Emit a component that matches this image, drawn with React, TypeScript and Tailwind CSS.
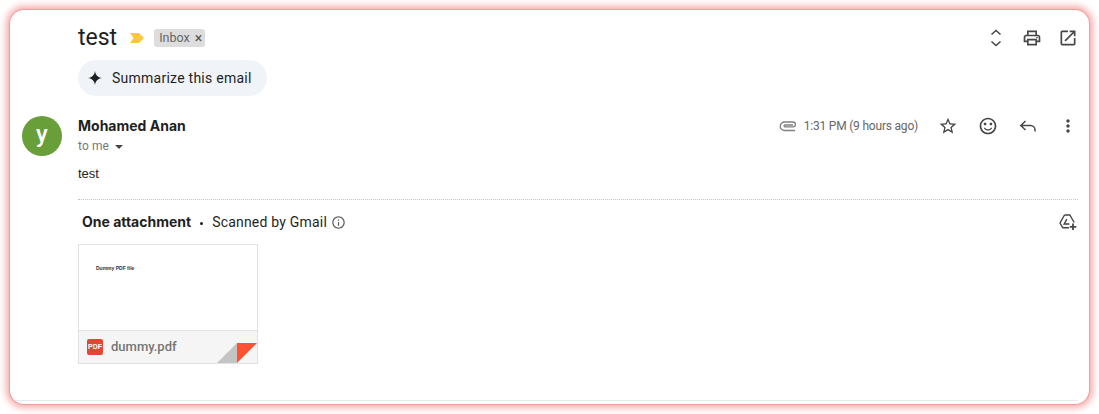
import {
  MdMoreVert,
  MdOpenInNew,
  MdOutlineInfo,
  MdOutlinePrint,
  MdSentimentSatisfiedAlt,
  MdStarBorder,
} from 'react-icons/md'

const sans = "font-['Roboto',sans-serif]"

export default function App() {
  return (
    <div className={`h-[414px] w-[1099px] overflow-hidden bg-white p-[10px] ${sans}`}>
      <div className="flex h-[394px] flex-col rounded-[14px] bg-white pr-[11px] pl-[12px] shadow-[0_0_0_1px_#f29c9c,0_0_7px_4px_#f6acac]">
        {/* Subject */}
        <div className="flex h-[34px] items-center pt-[22px] pl-[56px]">
          <span className="text-[23px] leading-[28px] text-[#1f1f1f]">test</span>
          <svg className="ml-[13px] h-[10px] w-[15px]" viewBox="0 0 15 10" aria-hidden="true">
            <path d="M0 0h9l5 5-5 5H0l3.500-5z" fill="#fbc73f" />
          </svg>
          <span className="ml-[9px] flex h-[18px] w-[51px] items-center rounded-[3px] bg-[#dddddd] pl-[5px] text-[12.5px] text-[#666666]">
            Inbox
            <span className="ml-[5px] text-[14px] leading-none text-[#555555]">×</span>
          </span>
          <div className="ml-auto flex items-center text-[#444746]">
            <svg className="h-[20px] w-[20px]" viewBox="0 0 20 20" fill="none" stroke="currentColor" strokeWidth="1.500" aria-hidden="true">
              <path d="M5.500 6.500 10 2.500l4.500 4M5.500 13.500l4.500 4 4.500-4" />
            </svg>
            <MdOutlinePrint size={20} className="ml-[16px]" />
            <MdOpenInNew size={20} className="ml-[16px]" />
          </div>
        </div>

        {/* Summarize */}
        <div className="mt-[16px] ml-[56px] flex h-[36px] w-[189px] items-center rounded-[18px] bg-[#f0f4f9] pl-[10px]">
          <svg className="h-[14px] w-[14px]" viewBox="0 0 14 14" aria-hidden="true">
            <path d="M7 0c.6 4 2.600 6.400 7 7-4.400.6-6.400 3-7 7-.6-4-2.600-6.400-7-7 4.400-.6 6.400-3 7-7z" fill="#1f1f1f" />
          </svg>
          <span className="ml-[10px] text-[14px] tracking-[0.25px] text-[#1f1f1f]">Summarize this email</span>
        </div>

        {/* Sender row */}
        <div className="mt-[20px] flex">
          <div className="flex h-[40px] w-[40px] shrink-0 items-center justify-center rounded-full bg-[#689f38] pb-[5px] text-[24px] font-medium text-white">
            y
          </div>
          <div className="ml-[16px] flex-1">
            <div className="flex h-[20px] items-center">
              <span className="-mt-[2px] font-['Inter',sans-serif] text-[14px] font-bold text-[#1f1f1f]">Mohamed Anan</span>
              <div className="ml-auto flex items-center text-[#444746]">
                <svg className="h-[14px] w-[18px]" viewBox="0 0 18 14" fill="none" stroke="#808080" strokeWidth="1.300" aria-hidden="true">
                  <path d="M16 11.500H5.500a3.700 3.700 0 0 1 0-8.500h8.500a2.200 2.200 0 0 1 0 4.800H6a.9.9 0 0 1 0-1.800h8" />
                </svg>
                <span className="ml-[7px] text-[12px] tracking-[-0.2px] text-[#666666]">1:31 PM (9 hours ago)</span>
                <MdStarBorder size={20} className="ml-[20px]" />
                <MdSentimentSatisfiedAlt size={20} className="ml-[20px]" />
                <svg className="ml-[20px] h-[20px] w-[20px]" viewBox="0 0 20 20" fill="none" stroke="currentColor" strokeWidth="1.500" aria-hidden="true">
                  <path d="M7.500 5 2.800 9.500l4.700 4.500M3 9.500h9.500a4.500 4.500 0 0 1 4.500 4.500v1.500" />
                </svg>
                <MdMoreVert size={20} className="ml-[20px]" />
              </div>
            </div>
            <div className="flex h-[20px] items-center text-[12px] tracking-[0.1px] text-[#777777]">
              to me
              <span className="mt-[1px] ml-[6px] h-0 w-0 border-x-[4px] border-t-[4px] border-x-transparent border-t-[#444746]" />
            </div>
            <p className="mt-[9px] font-['Liberation_Sans',sans-serif] text-[13px] leading-[18px] text-[#222222]">test</p>
          </div>
        </div>

        {/* Attachments */}
        <div className="mt-[16px] ml-[56px] flex flex-col border-t border-dotted border-[#c4c4c4]">
          <div className="mt-[12px] flex h-[20px] items-center pl-[4px] text-[14px] text-[#1f1f1f]">
            <span className="-mt-[2px] font-['Inter',sans-serif] font-bold">One attachment</span>
            <span className="mx-[9px] mt-[2px] h-[3px] w-[3px] rounded-full bg-[#1f1f1f]" />
            <span className="tracking-[0.2px]">Scanned by Gmail</span>
            <MdOutlineInfo size={15} className="ml-[4px] text-[#5e5e5e]" />
            <svg className="mr-[1px] ml-auto h-[18px] w-[18px]" viewBox="0 0 18 18" fill="none" stroke="#444746" strokeWidth="1.400" aria-hidden="true">
              <path d="M5.500 2h5.300l4.400 7.500M5.500 2 1 10l2.800 4.800H10M7.800 6.200 5.200 11h5.200" />
              <path d="M14 10.500v6.500M10.800 13.800h6.500" strokeWidth="1.800" />
            </svg>
          </div>
          <div className="relative mt-[12px] h-[120px] w-[180px] border border-[#e2e2e2] bg-white">
            <p className="pt-[20px] pl-[17px] font-['Liberation_Sans',sans-serif] text-[5px] leading-[6px] font-bold text-[#333333]">Dummy PDF file</p>
            <div className="absolute right-0 bottom-0 left-0 flex h-[33px] items-center border-t border-[#e2e2e2] bg-[#f5f5f5] pl-[8px]">
              <span className="flex h-[16px] w-[16px] items-center justify-center rounded-[2px] bg-[#ea4335] font-['Liberation_Sans',sans-serif] text-[7px] font-bold text-white">PDF</span>
              <span className="ml-[8px] text-[13px] font-medium text-[#757575]">dummy.pdf</span>
            </div>
            <svg className="absolute right-0 bottom-0 h-[20px] w-[40px]" viewBox="0 0 40 20" aria-hidden="true">
              <path d="M0 20 20 0v20z" fill="#c4c4c4" />
              <path d="M20 0h20L20 20z" fill="#ff5233" />
            </svg>
          </div>
        </div>

        <div className="mt-auto mb-[3px] -ml-[7px] border-t border-[#e8eaed]" />
      </div>
    </div>
  )
}
